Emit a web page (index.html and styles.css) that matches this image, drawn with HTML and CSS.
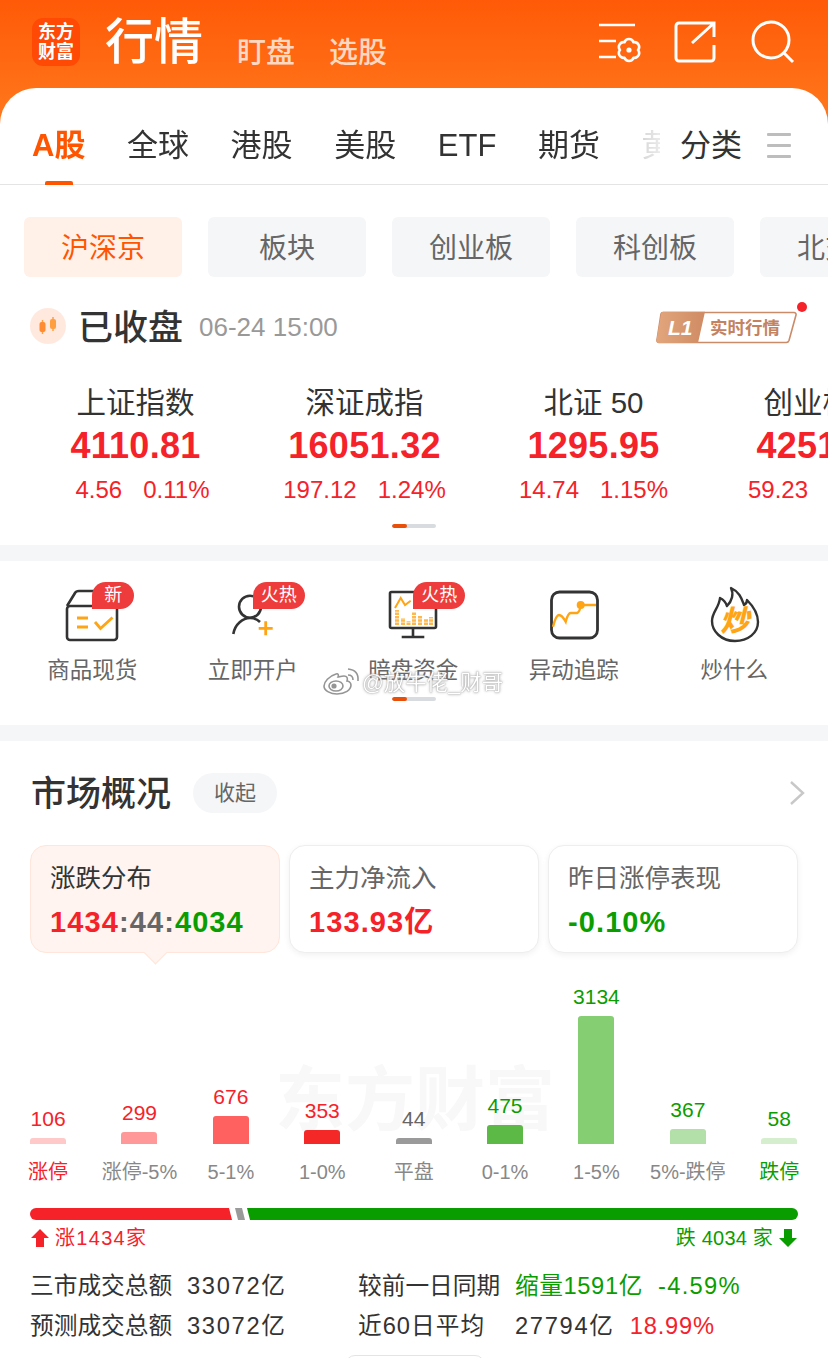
FILE: index.html
```html
<!DOCTYPE html>
<html lang="zh-CN">
<head>
<meta charset="UTF-8" />
<meta name="viewport" content="width=device-width, initial-scale=1.0"/>
<title>行情</title>
<link rel="stylesheet" href="styles.css">
</head>
<body>
<div class="page">

  <div class="top">
    <div class="header">
      <div class="logo"><span>东方</span><span>财富</span></div>
      <div class="header-title">行情</div>
      <div class="header-link">盯盘</div>
      <div class="header-link">选股</div>
      <div class="header-icons">
        <svg class="icon-set" width="44" height="40" viewBox="0 0 44 40" fill="none" stroke="#fff" stroke-width="2.600">
          <path d="M2 2H38M2 18H19M2 34H19"/>
          <path d="M41 27A4.800 4.800 0 0 1 36.500 34.800A4.800 4.800 0 0 1 27.500 34.800A4.800 4.800 0 0 1 23 27A4.800 4.800 0 0 1 27.500 19.200A4.800 4.800 0 0 1 36.500 19.200A4.800 4.800 0 0 1 41 27Z" stroke-linejoin="round"/>
          <circle cx="32" cy="27" r="2.600" fill="#fff" stroke="none"/>
        </svg>
        <svg class="icon-share" width="42" height="42" viewBox="0 0 42 42" fill="none" stroke="#fff" stroke-width="3">
          <path d="M26 2H5a3 3 0 0 0-3 3V37a3 3 0 0 0 3 3H37a3 3 0 0 0 3-3V24"/>
          <path d="M18 22L39 3M26 2H40V16"/>
        </svg>
        <svg class="icon-search" width="44" height="44" viewBox="0 0 44 44" fill="none" stroke="#fff" stroke-width="3">
          <circle cx="20" cy="20" r="18"/>
          <path d="M33 33L42 42"/>
        </svg>
      </div>
    </div>

    <div class="panel">
      <div class="tabs">
        <div class="tabs-scroll">
          <span class="tab active">A股</span>
          <span class="tab">全球</span>
          <span class="tab">港股</span>
          <span class="tab">美股</span>
          <span class="tab">ETF</span>
          <span class="tab">期货</span>
          <span class="tab">黄金</span>
        </div>
        <span class="tab tab-more">分类</span>
        <div class="tab-menu"><i></i><i></i><i></i></div>
      </div>
    </div>
  </div>

  <div class="pills">
    <span class="pill active">沪深京</span>
    <span class="pill">板块</span>
    <span class="pill">创业板</span>
    <span class="pill">科创板</span>
    <span class="pill">北交所</span>
  </div>

  <div class="status">
    <div class="status-icon">
      <svg width="24" height="24" viewBox="0 0 24 24">
        <path d="M6.500 6V20M17 3V17" stroke="#ffa040" stroke-width="1.500"/>
        <rect x="3.500" y="8" width="6" height="10" rx="2" fill="#ff8c32"/>
        <rect x="14" y="5" width="6" height="10" rx="2" fill="#ffa040"/>
      </svg>
    </div>
    <span class="status-text">已收盘</span>
    <span class="status-time">06-24 15:00</span>
    <div class="badge-l1">
      <svg width="143" height="33" viewBox="0 0 143 33">
        <defs>
          <linearGradient id="l1fill" x1="0" x2="1" y1="0" y2="0">
            <stop offset="0" stop-color="#e2a67c"/>
            <stop offset="1" stop-color="#cf8b64"/>
          </linearGradient>
        </defs>
        <path d="M8 1.500H139a2 2 0 0 1 2 2.500L134 29.500a3 3 0 0 1-3 2H4a2 2 0 0 1-2-2.500L6 3a2 2 0 0 1 2-1.500z" fill="#fff" stroke="#cb8a68" stroke-width="1.600"/>
        <path d="M8 .8H50L43 32H4a2.500 2.500 0 0 1-2.500-3L6 3a2.500 2.500 0 0 1 2-2.200z" fill="url(#l1fill)"/>
        <text class="l1-mark" x="13" y="24">L1</text>
        <text class="l1-text" x="55" y="23">实时行情</text>
      </svg>
      <i class="badge-dot"></i>
    </div>
  </div>

  <div class="indexes">
    <div class="index">
      <div class="index-name">上证指数</div>
      <div class="index-value">4110.81</div>
      <div class="index-change first"><span>4.56</span><span>0.11%</span></div>
    </div>
    <div class="index">
      <div class="index-name">深证成指</div>
      <div class="index-value">16051.32</div>
      <div class="index-change"><span>197.12</span><span>1.24%</span></div>
    </div>
    <div class="index">
      <div class="index-name">北证 50</div>
      <div class="index-value">1295.95</div>
      <div class="index-change"><span>14.74</span><span>1.15%</span></div>
    </div>
    <div class="index">
      <div class="index-name">创业板指</div>
      <div class="index-value">4251.36</div>
      <div class="index-change"><span>59.23</span><span>1.41%</span></div>
    </div>
  </div>
  <div class="pager index-pager"><i></i></div>

  <div class="divider"></div>

  <div class="quick">
    <div class="quick-row">
      <div class="quick-item">
        <div class="quick-icon">
          <svg width="60" height="60" viewBox="0 0 60 60" fill="none">
            <path d="M5 22L13 9Q14 7 17 7H42" stroke="#333" stroke-width="2.600"/>
            <rect x="5" y="22" width="50" height="34" rx="3" stroke="#333" stroke-width="2.600"/>
            <path d="M15 34H26M15 43H26M33 38L38.500 44.500L50.500 33.500" stroke="#ffa414" stroke-width="2.800"/>
          </svg>
          <span class="tag tag-one">新</span>
        </div>
        <span class="quick-label">商品现货</span>
      </div>
      <div class="quick-item">
        <div class="quick-icon">
          <svg width="60" height="60" viewBox="0 0 60 60" fill="none">
            <circle cx="27" cy="22.700" r="11" stroke="#333" stroke-width="2.600"/>
            <path d="M10.300 50C12 40 20 34 27 34Q33 34 37 38" stroke="#333" stroke-width="2.600"/>
            <path d="M42.700 37.300V51.300M35.700 44.300H49.700" stroke="#ffa414" stroke-width="2.800"/>
          </svg>
          <span class="tag tag-two">火热</span>
        </div>
        <span class="quick-label">立即开户</span>
      </div>
      <div class="quick-item">
        <div class="quick-icon">
          <svg width="60" height="60" viewBox="0 0 60 60" fill="none">
            <rect x="7" y="8" width="46" height="36" rx="1.500" stroke="#333" stroke-width="2.600"/>
            <path d="M30 44V53M18.700 53H41.300" stroke="#333" stroke-width="2.600"/>
            <path d="M12 24L17.700 14L22 21L27.700 16.700" stroke="#ffa414" stroke-width="2"/>
            <path d="M14 41V26M20 41V34M25.500 41V37M31 41V28M37 41V31M43 41V35M48 41V33" stroke="#ffb84d" stroke-width="4" stroke-dasharray="2.500 .8"/>
          </svg>
          <span class="tag tag-two">火热</span>
        </div>
        <span class="quick-label">暗盘资金</span>
      </div>
      <div class="quick-item">
        <div class="quick-icon">
          <svg width="60" height="60" viewBox="0 0 60 60" fill="none">
            <rect x="7.500" y="8" width="46" height="46" rx="8" stroke="#333" stroke-width="2.800"/>
            <path d="M9 42.700Q12 31 15 31T21.700 37.700Q24 29 26.700 29T33 29Q36 28 36.700 21H52" stroke="#ffa414" stroke-width="2.400"/>
            <circle cx="36.700" cy="21" r="4" fill="#ffa414"/>
          </svg>
        </div>
        <span class="quick-label">异动追踪</span>
      </div>
      <div class="quick-item">
        <div class="quick-icon">
          <svg width="60" height="60" viewBox="0 0 60 60" fill="none">
            <path d="M31 57C17 57 8 47 8 37C8 28 15 24 16 14C20 16 22 19 23 22C28 17 30 10 27 4C36 8 38 16 40 21C42 20 43 18 43 16C50 23 54 30 54 38C54 49 44 57 31 57Z" stroke="#333" stroke-width="2.400" stroke-linejoin="round"/>
            <text class="flame-text" x="16" y="47">炒</text>
          </svg>
        </div>
        <span class="quick-label">炒什么</span>
      </div>
    </div>
    <div class="pager"><i></i></div>
    <div class="watermark">
      <svg width="38" height="28" viewBox="0 0 38 28" fill="none" stroke="#8a8a8a" stroke-width="1.600">
        <path d="M14 7C7 9 2 15 2 19C2 24 9 27 15 27C23 27 29 23 29 18C29 15 26 14 25 14C26 11 25 9 22 9C19 9 17 10 16 10C17 8 16 6 14 7Z" fill="#fff"/>
        <ellipse cx="14" cy="19" rx="7" ry="5"/>
        <circle cx="12" cy="19" r="1.800" fill="#8a8a8a"/>
        <path d="M26 8Q31 8 31 13M26 2Q37 3 36 14"/>
      </svg>
      <span>@放牛佬_财哥</span>
    </div>
  </div>

  <div class="divider"></div>

  <div class="market">
    <div class="market-head">
      <span class="market-title">市场概况</span>
      <span class="market-fold">收起</span>
      <svg class="market-arrow" width="16" height="26" viewBox="0 0 16 26" fill="none" stroke="#c8c8c8" stroke-width="2.400">
        <path d="M2 2L14 13L2 24"/>
      </svg>
    </div>

    <div class="cards">
      <div class="card active">
        <div class="card-title">涨跌分布</div>
        <div class="card-value"><span class="up">1434</span><span class="flat">:44:</span><span class="down">4034</span></div>
      </div>
      <div class="card">
        <div class="card-title">主力净流入</div>
        <div class="card-value up">133.93亿</div>
      </div>
      <div class="card">
        <div class="card-title">昨日涨停表现</div>
        <div class="card-value down">-0.10%</div>
      </div>
    </div>

    <div class="chart">
      <div class="chart-mark">东方财富</div>
      <div class="col up"><span class="col-value">106</span><i class="bar b1" style="height: 6px"></i><span class="col-label">涨停</span></div>
      <div class="col up"><span class="col-value">299</span><i class="bar b2" style="height: 12px"></i><span class="col-label grey">涨停-5%</span></div>
      <div class="col up"><span class="col-value">676</span><i class="bar b3" style="height: 28px"></i><span class="col-label grey">5-1%</span></div>
      <div class="col up"><span class="col-value">353</span><i class="bar b4" style="height: 14px"></i><span class="col-label grey">1-0%</span></div>
      <div class="col flat"><span class="col-value">44</span><i class="bar b5" style="height: 6px"></i><span class="col-label grey">平盘</span></div>
      <div class="col down"><span class="col-value">475</span><i class="bar b6" style="height: 19px"></i><span class="col-label grey">0-1%</span></div>
      <div class="col down"><span class="col-value">3134</span><i class="bar b7" style="height: 128px"></i><span class="col-label grey">1-5%</span></div>
      <div class="col down"><span class="col-value">367</span><i class="bar b8" style="height: 15px"></i><span class="col-label grey">5%-跌停</span></div>
      <div class="col down"><span class="col-value">58</span><i class="bar b9" style="height: 6px"></i><span class="col-label">跌停</span></div>
    </div>

    <div class="split">
      <i class="split-up"></i>
      <i class="split-flat"></i>
      <i class="split-down"></i>
    </div>

    <div class="counts">
      <span class="count up">
        <svg width="18" height="18" viewBox="0 0 18 18"><path d="M9 0L18 9H13V18H5V9H0Z" fill="#f5222a"/></svg>
        <span class="count-up-text">涨1434家</span>
      </span>
      <span class="count down">
        <span class="count-down-text">跌 4034 家</span>
        <svg width="18" height="18" viewBox="0 0 18 18"><path d="M9 18L18 9H13V0H5V9H0Z" fill="#0a9d00"/></svg>
      </span>
    </div>

    <div class="stats">
      <span>三市成交总额</span><span class="stat-num">33072亿</span><span>较前一日同期</span>
      <span class="stat-pair down"><b class="stat-tight">缩量1591亿</b><b class="stat-pct">-4.59%</b></span>
      <span>预测成交总额</span><span class="stat-num">33072亿</span><span class="stat-avg">近60日平均</span>
      <span class="stat-pair"><b class="stat-num">27794亿</b><b class="stat-rate up">18.99%</b></span>
    </div>

    <div class="peek"></div>
  </div>

</div>
</body>
</html>
```

FILE: styles.css
```css
* {
  box-sizing: border-box;
}

body {
  margin: 0;
  background-color: #fff;
  color: #333;
  font-family: "Liberation Sans", "Noto Sans CJK SC", sans-serif;
}

.page {
  width: 828px;
  height: 1358px;
  overflow: hidden;
  position: relative;
}

i {
  display: block;
}

.up {
  color: #f5222a;
}

.down {
  color: #0a9d00;
}

.flat {
  color: #666;
}

/* header */
.top {
  background: linear-gradient(180deg, #ff5a07 0%, #ff7a1e 70%, #ff7a1e 100%);
}

.header {
  height: 88px;
  display: flex;
  align-items: flex-start;
  padding-left: 32px;
}

.logo {
  width: 48px;
  height: 48px;
  margin-top: 18px;
  border-radius: 11px;
  background-color: #ff4a05;
  color: #fff;
  font-size: 18px;
  font-weight: 700;
  line-height: 20px;
  display: flex;
  flex-direction: column;
  align-items: center;
  justify-content: center;
}

.header-title {
  margin: 12px 0 0 25px;
  font-size: 49px;
  line-height: 60px;
  font-weight: 500;
  color: #fff;
}

.header-link {
  margin: 32px 0 0 34px;
  font-size: 29px;
  line-height: 42px;
  font-weight: 500;
  color: rgba(255, 255, 255, 0.75);
}

.header-icons {
  margin-left: auto;
  display: flex;
  align-items: flex-start;
}

.icon-set {
  margin-top: 23px;
}

.icon-share {
  margin: 21px 0 0 33px;
}

.icon-search {
  margin: 20px 33px 0 35px;
}

.panel {
  background-color: #fff;
  border-radius: 36px 36px 0 0;
}

.tabs {
  height: 97px;
  display: flex;
  align-items: center;
  border-bottom: 1px solid #e4e4e4;
  padding-top: 19px;
}

.tabs-scroll {
  width: 660px;
  overflow: hidden;
  display: flex;
  gap: 41.6px;
  padding-left: 32px;
  padding-bottom: 19px;
  margin-bottom: -19px;
  -webkit-mask-image: linear-gradient(90deg, #000 620px, rgba(0, 0, 0, 0.18) 645px, rgba(0, 0, 0, 0.1) 660px);
  mask-image: linear-gradient(90deg, #000 620px, rgba(0, 0, 0, 0.18) 645px, rgba(0, 0, 0, 0.1) 660px);
}

.tab {
  flex: none;
  font-size: 31px;
  line-height: 46px;
  color: #333;
  position: relative;
}

.tab.active {
  color: #ff5500;
  font-weight: 700;
}

.tab.active::after {
  content: "";
  position: absolute;
  left: 13px;
  bottom: -16px;
  width: 28px;
  height: 4px;
  border-radius: 2px 2px 0 0;
  background-color: #ff5500;
}

.tab-more {
  margin-left: 20px;
}

.tab-menu {
  margin-left: 25px;
  width: 24px;
  display: flex;
  flex-direction: column;
  gap: 8px;
}

.tab-menu i {
  height: 3px;
  border-radius: 1px;
  background-color: #bdbdbd;
}

/* sub tabs */
.pills {
  margin-top: 32px;
  padding-left: 24px;
  display: flex;
  gap: 26px;
  width: 828px;
  overflow: hidden;
}

.pill {
  flex: none;
  width: 158px;
  height: 60px;
  border-radius: 6px;
  background-color: #f5f6f8;
  color: #666;
  font-size: 28px;
  line-height: 64px;
  text-align: center;
}

.pill.active {
  background-color: #fff0e8;
  color: #ff5500;
}

/* market status */
.status {
  margin-top: 30px;
  height: 38px;
  padding: 0 30px;
  display: flex;
  align-items: center;
}

.status-icon {
  width: 36px;
  height: 36px;
  border-radius: 50%;
  background-color: #ffe9df;
  display: flex;
  align-items: center;
  justify-content: center;
}

.status-text {
  margin-left: 12px;
  font-size: 35px;
  font-weight: 500;
  line-height: 38px;
  padding-top: 3px;
}

.status-time {
  margin-left: 16px;
  font-size: 26px;
  color: #999;
  padding-top: 2px;
}

.badge-l1 {
  margin-left: auto;
  height: 33px;
  position: relative;
  top: 1px;
}

.l1-mark {
  font: italic 700 21px "Liberation Sans", sans-serif;
  fill: #fff;
}

.l1-text {
  font: 700 17.500px "Noto Sans CJK SC", sans-serif;
  fill: #c48260;
}

.badge-dot {
  position: absolute;
  right: -9px;
  top: -9px;
  width: 10px;
  height: 10px;
  border-radius: 50%;
  background-color: #f5222a;
}

/* index strip */
.indexes {
  margin-top: 40px;
  padding-left: 21px;
  display: flex;
  width: 828px;
  overflow: hidden;
}

.index {
  flex: none;
  width: 229px;
  text-align: center;
}

.index-name {
  font-size: 29.500px;
  line-height: 36px;
  white-space: nowrap;
}

.index-value {
  margin-top: 3px;
  font-size: 36px;
  line-height: 44px;
  font-weight: 700;
  letter-spacing: 0.3px;
  color: #f5222a;
}

.index-change {
  margin-top: 8px;
  font-size: 24px;
  line-height: 28px;
  color: #f5222a;
  display: flex;
  justify-content: center;
  gap: 21px;
}

.index-change.first {
  padding-left: 14px;
}

.pager {
  width: 44px;
  height: 4px;
  border-radius: 2px;
  background-color: #d8dbe0;
  margin: 0 auto;
  overflow: hidden;
}

.pager i {
  width: 15px;
  height: 4px;
  border-radius: 2px;
  background-color: #ea4f0a;
}

.index-pager {
  margin-top: 20px;
  margin-bottom: 17px;
}

.divider {
  height: 16px;
  background-color: #f5f6f8;
}

/* quick entries */
.quick {
  height: 164px;
  position: relative;
  padding-top: 23px;
}

.quick-row {
  display: grid;
  grid-template-columns: repeat(5, 160.5px);
  padding-left: 12px;
}

.quick-item {
  display: flex;
  flex-direction: column;
  align-items: center;
}

.quick-icon {
  width: 60px;
  height: 60px;
  position: relative;
}

.tag {
  position: absolute;
  top: -2px;
  height: 27px;
  border-radius: 14px 14px 14px 0;
  background-color: #ee3b3b;
  color: #fff;
  font-size: 18px;
  line-height: 27px;
  text-align: center;
}

.tag-one {
  left: 30px;
  width: 42px;
}

.tag-two {
  left: 30px;
  width: 52px;
}

.quick-label {
  margin-top: 10px;
  font-size: 22.500px;
  line-height: 34px;
  color: #666;
}

.flame-text {
  font: italic 900 29px "Noto Sans CJK SC", sans-serif;
  fill: #ffa414;
}

.quick .pager {
  margin-top: 9px;
}

.watermark {
  position: absolute;
  left: 322px;
  top: 104px;
  display: flex;
  align-items: center;
  gap: 2px;
  font-size: 21.500px;
  color: #fff;
  text-shadow: 0 0 1px #777, 0 0 3px #999;
  opacity: 0.9;
}

/* market overview */
.market {
  padding-top: 32px;
}

.market-head {
  height: 40px;
  padding-left: 31px;
  padding-right: 23px;
  display: flex;
  align-items: center;
}

.market-title {
  font-size: 35px;
  font-weight: 500;
  padding-bottom: 5px;
}

.market-fold {
  margin-left: 22px;
  width: 84px;
  height: 40px;
  border-radius: 20px;
  background-color: #f5f6f8;
  color: #666;
  font-size: 21px;
  line-height: 40px;
  text-align: center;
}

.market-arrow {
  margin-left: auto;
}

.cards {
  margin-top: 32px;
  padding-left: 30px;
  display: flex;
  gap: 9px;
}

.card {
  width: 250px;
  height: 108px;
  border: 1px solid #eee;
  border-radius: 16px;
  background-color: #fff;
  box-shadow: 0 2px 6px rgba(0, 0, 0, 0.06);
  padding: 13px 0 0 19px;
  position: relative;
}

.card.active {
  background-color: #fff4f0;
  border-color: #ffe5da;
  box-shadow: none;
}

.card.active::after {
  content: "";
  position: absolute;
  left: 116px;
  bottom: -9px;
  width: 16px;
  height: 16px;
  background-color: #fff4f0;
  border-right: 1px solid #ffe5da;
  border-bottom: 1px solid #ffe5da;
  transform: rotate(45deg);
}

.card-title {
  font-size: 25.500px;
  line-height: 38px;
  color: #666;
}

.card.active .card-title {
  color: #333;
}

.card-value {
  margin-top: 6px;
  font-size: 29px;
  line-height: 38px;
  font-weight: 700;
  letter-spacing: 1.100px;
}

.chart {
  height: 233px;
  display: grid;
  grid-template-columns: repeat(9, 91.4px);
  padding-left: 2.400px;
  position: relative;
}

.chart-mark {
  position: absolute;
  left: 275px;
  top: 108px;
  font-size: 70px;
  line-height: 80px;
  font-weight: 700;
  color: #f8f8f8;
  white-space: nowrap;
}

.col {
  display: flex;
  flex-direction: column;
  align-items: center;
  justify-content: flex-end;
  position: relative;
}

.col-value {
  font-size: 21px;
  line-height: 24px;
  margin-bottom: 7px;
}

.bar {
  width: 36px;
  border-radius: 3px 3px 0 0;
}

.b1 { background-color: #ffc9c9; }
.b2 { background-color: #ff9999; }
.b3 { background-color: #ff6060; }
.b4 { background-color: #f52828; }
.b5 { background-color: #9a9a9a; }
.b6 { background-color: #5cb946; }
.b7 { background-color: #85cf72; }
.b8 { background-color: #b2e0a8; }
.b9 { background-color: #d5efce; }

.col-label {
  margin-top: 14px;
  font-size: 20px;
  line-height: 28px;
  white-space: nowrap;
}

.col-label.grey {
  color: #888;
}

.split {
  margin: 22px 30px 0;
  height: 12px;
  position: relative;
  display: flex;
}

.split i {
  height: 12px;
}

.split-up {
  width: 202px;
  border-radius: 6px 0 0 6px;
  background-color: #f5222a;
  clip-path: polygon(0 0, 199px 0, 202px 100%, 0 100%);
}

.split-flat {
  width: 10px;
  margin-left: 3px;
  background-color: #9a9a9a;
  clip-path: polygon(0 0, 7px 0, 10px 100%, 3px 100%);
}

.split-down {
  flex: 1;
  margin-left: 2px;
  border-radius: 0 6px 6px 0;
  background-color: #0a9d00;
  clip-path: polygon(0 0, 100% 0, 100% 100%, 3px 100%);
}

.counts {
  margin-top: 6px;
  padding: 0 31px;
  height: 24px;
  display: flex;
  justify-content: space-between;
}

.count {
  display: flex;
  align-items: center;
  gap: 6px;
  font-size: 20px;
  line-height: 24px;
}

.count-up-text {
  letter-spacing: 1.300px;
}

.count-down-text {
  letter-spacing: 0.200px;
}

.stats {
  margin-top: 14px;
  padding-left: 30px;
  display: grid;
  grid-template-columns: 157px 171px 157px auto;
  grid-auto-rows: 40px;
  align-items: center;
  font-size: 23.700px;
  white-space: nowrap;
}

.stat-num {
  letter-spacing: 1.700px;
}

.stat-pct {
  letter-spacing: 1.300px;
}

.stat-rate {
  letter-spacing: 0.800px;
}

.stat-avg {
  letter-spacing: 1px;
}

.stat-pair {
  display: flex;
  align-items: baseline;
  gap: 15px;
}

.stat-pair b {
  font-weight: 400;
}

.stat-tight {
  letter-spacing: 0.600px;
}

.peek {
  margin: 11px 0 0 345px;
  width: 140px;
  height: 20px;
  border: 1px solid #e4e4e4;
  border-radius: 14px;
}
```
